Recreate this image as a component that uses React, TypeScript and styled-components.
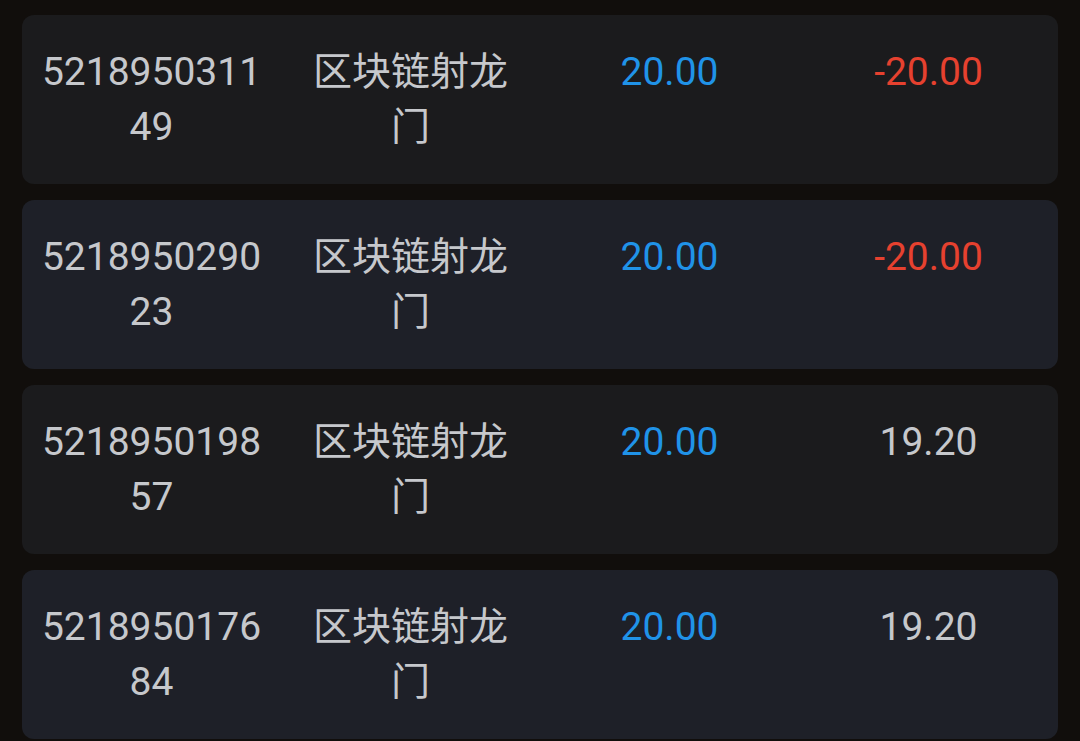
import React from "react";
import styled, { createGlobalStyle } from "styled-components";

type Order = {
  id: string;
  name: string;
  amount: string;
  result: string;
};

const orders: Array<Order> = [
  { id: "521895031149", name: "区块链射龙门", amount: "20.00", result: "-20.00" },
  { id: "521895029023", name: "区块链射龙门", amount: "20.00", result: "-20.00" },
  { id: "521895019857", name: "区块链射龙门", amount: "20.00", result: "19.20" },
  { id: "521895017684", name: "区块链射龙门", amount: "20.00", result: "19.20" },
];

const GlobalStyle = createGlobalStyle`
  html, body {
    margin: 0;
    padding: 0;
    background: #110e0c;
  }
  body {
    font-family: Roboto, "Noto Sans CJK SC", sans-serif;
  }
`;

const Page = styled.div`
  display: flex;
  flex-direction: column;
  gap: 16px;
  padding: 15px 22px 0;
  height: 741px;
  box-sizing: border-box;
  overflow: hidden;
`;

const Card = styled.div<{ $alt: boolean }>`
  display: grid;
  grid-template-columns: repeat(4, 1fr);
  flex-shrink: 0;
  padding: 30px 0 29px;
  border-radius: 12px;
  background: ${(p) => (p.$alt ? "#1e2028" : "#1b1b1d")};
`;

const Cell = styled.div<{ $tone?: "blue" | "red" }>`
  padding: 0 16px;
  text-align: center;
  font-size: 39px;
  line-height: 55px;
  word-break: break-all;
  color: ${(p) =>
    p.$tone === "blue" ? "#2093e8" : p.$tone === "red" ? "#e6412f" : "#c6c8cc"};
`;

export default function App() {
  return (
    <>
      <GlobalStyle />
      <Page>
        {orders.map((o, i) => (
          <Card key={o.id} $alt={i % 2 === 1}>
            <Cell>{o.id}</Cell>
            <Cell>{o.name}</Cell>
            <Cell $tone="blue">{o.amount}</Cell>
            <Cell $tone={o.result.startsWith("-") ? "red" : undefined}>{o.result}</Cell>
          </Card>
        ))}
      </Page>
    </>
  );
}
